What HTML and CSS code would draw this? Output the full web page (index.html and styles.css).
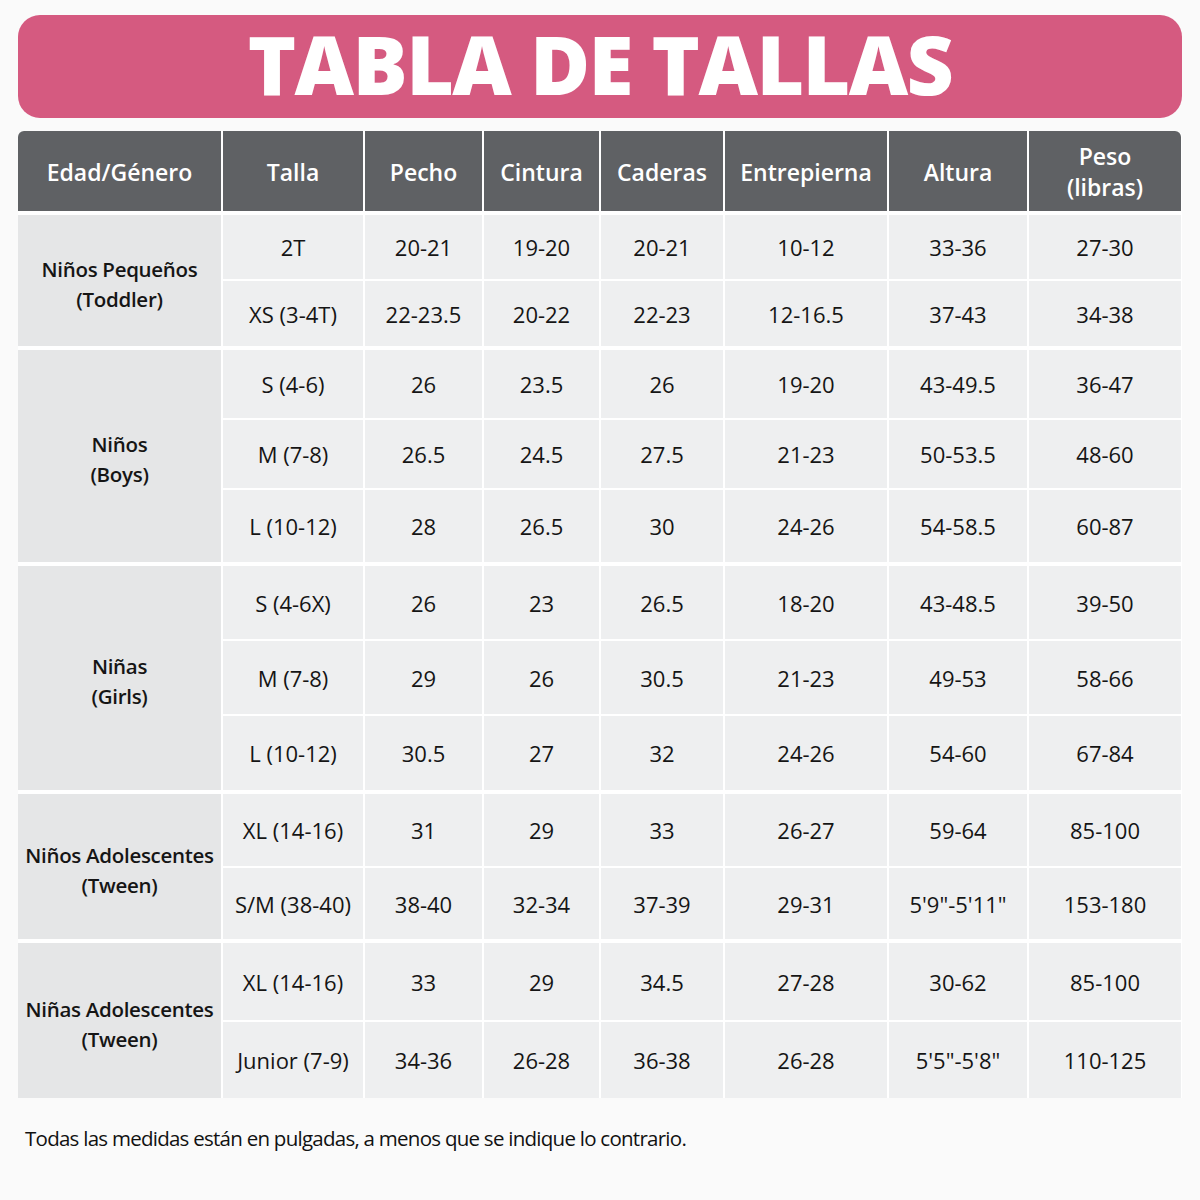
FILE: index.html
```html
<!DOCTYPE html>
<html lang="es">
<head>
<meta charset="utf-8">
<link rel="stylesheet" href="styles.css">
</head>
<body>
<div class="page">
  <div class="banner"><h1>TABLA DE TALLAS</h1></div>
  <div class="table">
    <div class="grid head">
      <div class="c">Edad/Género</div>
      <div class="c">Talla</div>
      <div class="c">Pecho</div>
      <div class="c">Cintura</div>
      <div class="c">Caderas</div>
      <div class="c">Entrepierna</div>
      <div class="c">Altura</div>
      <div class="c">Peso<br>(libras)</div>
    </div>
    <div class="grid g1">
      <div class="c label r2">Niños Pequeños<br>(Toddler)</div>
      <div class="c">2T</div><div class="c">20-21</div><div class="c">19-20</div><div class="c">20-21</div><div class="c">10-12</div><div class="c">33-36</div><div class="c">27-30</div>
      <div class="c">XS (3-4T)</div><div class="c">22-23.5</div><div class="c">20-22</div><div class="c">22-23</div><div class="c">12-16.5</div><div class="c">37-43</div><div class="c">34-38</div>
    </div>
    <div class="grid g2">
      <div class="c label r3">Niños<br>(Boys)</div>
      <div class="c">S (4-6)</div><div class="c">26</div><div class="c">23.5</div><div class="c">26</div><div class="c">19-20</div><div class="c">43-49.5</div><div class="c">36-47</div>
      <div class="c">M (7-8)</div><div class="c">26.5</div><div class="c">24.5</div><div class="c">27.5</div><div class="c">21-23</div><div class="c">50-53.5</div><div class="c">48-60</div>
      <div class="c">L (10-12)</div><div class="c">28</div><div class="c">26.5</div><div class="c">30</div><div class="c">24-26</div><div class="c">54-58.5</div><div class="c">60-87</div>
    </div>
    <div class="grid g3">
      <div class="c label r3">Niñas<br>(Girls)</div>
      <div class="c">S (4-6X)</div><div class="c">26</div><div class="c">23</div><div class="c">26.5</div><div class="c">18-20</div><div class="c">43-48.5</div><div class="c">39-50</div>
      <div class="c">M (7-8)</div><div class="c">29</div><div class="c">26</div><div class="c">30.5</div><div class="c">21-23</div><div class="c">49-53</div><div class="c">58-66</div>
      <div class="c">L (10-12)</div><div class="c">30.5</div><div class="c">27</div><div class="c">32</div><div class="c">24-26</div><div class="c">54-60</div><div class="c">67-84</div>
    </div>
    <div class="grid g4">
      <div class="c label r2">Niños Adolescentes<br>(Tween)</div>
      <div class="c">XL (14-16)</div><div class="c">31</div><div class="c">29</div><div class="c">33</div><div class="c">26-27</div><div class="c">59-64</div><div class="c">85-100</div>
      <div class="c">S/M (38-40)</div><div class="c">38-40</div><div class="c">32-34</div><div class="c">37-39</div><div class="c">29-31</div><div class="c">5'9"-5'11"</div><div class="c">153-180</div>
    </div>
    <div class="grid g5">
      <div class="c label r2">Niñas Adolescentes<br>(Tween)</div>
      <div class="c">XL (14-16)</div><div class="c">33</div><div class="c">29</div><div class="c">34.5</div><div class="c">27-28</div><div class="c">30-62</div><div class="c">85-100</div>
      <div class="c">Junior (7-9)</div><div class="c">34-36</div><div class="c">26-28</div><div class="c">36-38</div><div class="c">26-28</div><div class="c">5'5"-5'8"</div><div class="c">110-125</div>
    </div>
  </div>
  <p class="note">Todas las medidas están en pulgadas, a menos que se indique lo contrario.</p>
</div>
</body>
</html>
```
FILE: styles.css
```css
html, body {
  margin: 0;
  padding: 0;
  background: #fafafa;
}
body {
  font-family: "Open Sans", "Noto Sans", sans-serif;
  color: #151515;
  width: 1200px;
  height: 1200px;
  overflow: hidden;
}
.page {
  padding: 15px 18px 0 18px;
}
.banner {
  height: 103px;
  background: #d55a80;
  border-radius: 22px;
  display: flex;
  align-items: center;
  justify-content: center;
}
.banner h1 {
  margin: 0 0 8px 0;
  color: #fff;
  font-family: "Open Sans", sans-serif;
  font-weight: 800;
  font-size: 82px;
  letter-spacing: -1.6px;
  line-height: 1;
}
.table {
  margin-top: 13px;
  background: #fff;
  display: flex;
  flex-direction: column;
  gap: 4px;
  border-radius: 6px 6px 0 0;
}
.grid {
  display: grid;
  grid-template-columns: 203px 140px 117px 115px 122px 162px 138px 152px;
  column-gap: 2px;
  row-gap: 2px;
}
.c {
  background: #eeeff0;
  display: flex;
  align-items: center;
  justify-content: center;
  text-align: center;
  font-size: 22px;
  line-height: 30px;
}
.head {
  height: 80px;
}
.head .c {
  background: #5f6164;
  color: #fff;
  font-weight: 600;
  font-size: 23px;
  line-height: 31px;
  padding-top: 2px;
}
.head .c:first-child { border-top-left-radius: 6px; }
.head .c:last-child { border-top-right-radius: 6px; }
.label {
  background: #e5e6e7;
  font-weight: 600;
  font-size: 20.5px;
  line-height: 30px;
  padding-top: 6px;
  letter-spacing: -0.3px;
}
.r2 { grid-row: span 2; }
.r3 { grid-row: span 3; }
.g1 { grid-template-rows: 64px 65px; }
.g2 { grid-template-rows: 68px 68px 72px; }
.g3 { grid-template-rows: 73px 73px 74px; }
.g4 { grid-template-rows: 72px 71px; }
.g5 { grid-template-rows: 77px 76px; }
.note {
  margin: 26px 0 0 7px;
  font-size: 20.5px;
  letter-spacing: -0.74px;
  color: #111;
}
```
